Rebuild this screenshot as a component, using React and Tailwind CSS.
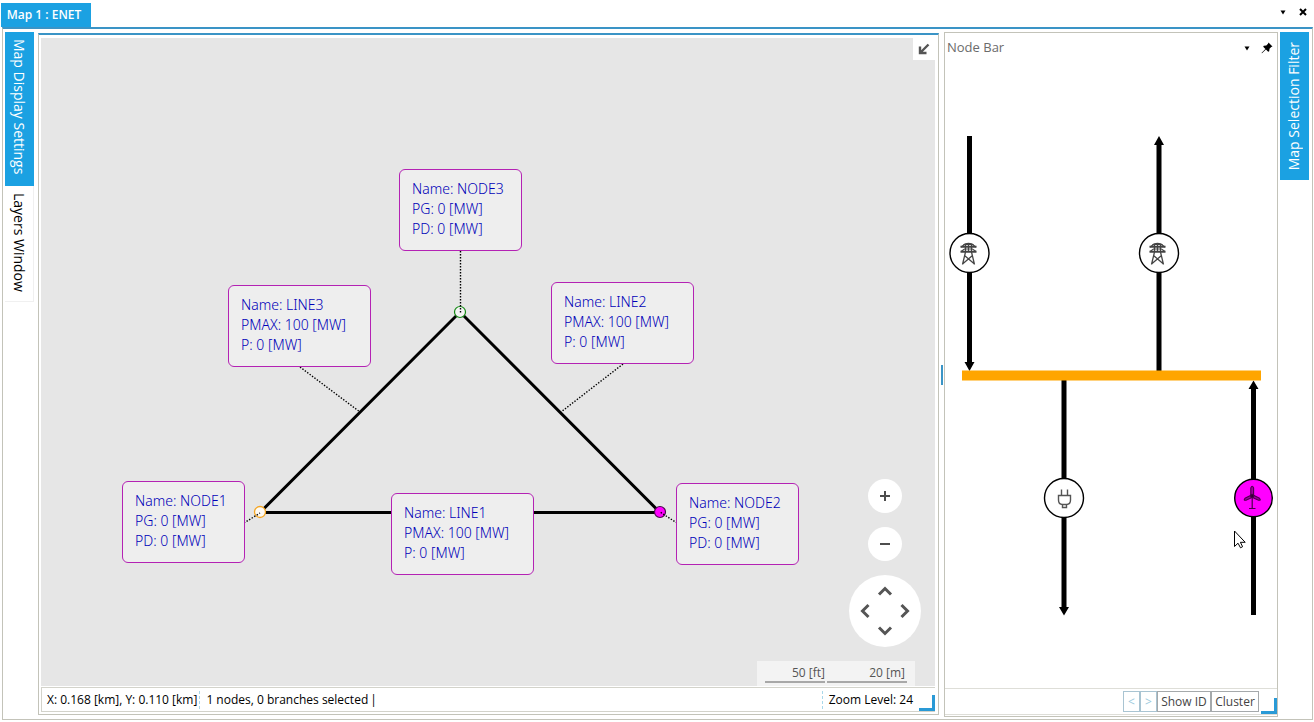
import React from "react";

const LABELS = [
  { name: "NODE3", pos: "left-[358px] top-[131px] w-[123px]", rows: ["PG: 0 [MW]", "PD: 0 [MW]"] },
  { name: "LINE3", pos: "left-[187px] top-[247px] w-[143px]", rows: ["PMAX: 100 [MW]", "P: 0 [MW]"] },
  { name: "LINE2", pos: "left-[510px] top-[244px] w-[143px]", rows: ["PMAX: 100 [MW]", "P: 0 [MW]"] },
  { name: "NODE1", pos: "left-[81px] top-[443px] w-[123px]", rows: ["PG: 0 [MW]", "PD: 0 [MW]"] },
  { name: "LINE1", pos: "left-[350px] top-[455px] w-[143px]", rows: ["PMAX: 100 [MW]", "P: 0 [MW]"] },
  { name: "NODE2", pos: "left-[635px] top-[445px] w-[123px]", rows: ["PG: 0 [MW]", "PD: 0 [MW]"] },
];

function Caret() {
  return (
    <svg width="6" height="5" viewBox="0 0 6 5" aria-hidden="true">
      <path d="M0.5 0.5H5.5L3 4.5Z" fill="#000" />
    </svg>
  );
}

function Corner() {
  return <span className="h-4 w-4 shrink-0 self-end border-b-3 border-r-3 border-[#2a9ad6]" />;
}

function Network() {
  return (
    <svg className="absolute inset-0 h-full w-full" aria-hidden="true">
      <g stroke="#000" strokeWidth="3" fill="none">
        <path d="M219 474.5L419 274L619 474.5Z" />
      </g>
      <circle cx="419" cy="274" r="5.5" fill="#f4f4f4" stroke="#148a14" strokeWidth="1.2" />
      <circle cx="219" cy="474" r="5.5" fill="#fdfaf5" stroke="#f5a623" strokeWidth="1.3" />
      <circle cx="619" cy="474" r="5.5" fill="#ff00ff" stroke="#4a0a4a" strokeWidth="1.2" />
      <g stroke="#000" strokeWidth="1.4" strokeDasharray="1.4 1.6" fill="none">
        <path d="M419.5 213V275" />
        <path d="M259 329L319 374" />
        <path d="M582 326L520 374" />
        <path d="M203 485L219 475" />
        <path d="M636 485L619 474" />
      </g>
    </svg>
  );
}

function MapLabel({ name, pos, rows }) {
  return (
    <div
      className={
        "absolute h-[82px] whitespace-nowrap rounded-md border border-[#b422b4] bg-[#eeeeee] px-3 pt-[9px] font-['Noto_Sans','Open_Sans',sans-serif] text-sm leading-5 font-light text-[#0000b8] " +
        pos
      }
    >
      <p>Name: {name}</p>
      {rows.map((r) => (
        <p key={r}>{r}</p>
      ))}
    </div>
  );
}

function MapControls() {
  return (
    <div className="absolute right-[14px] bottom-[39px] flex flex-col items-center gap-[14px]">
      <button aria-label="Zoom in" className="grid h-[34px] w-[34px] place-items-center rounded-full bg-white">
        <svg width="12" height="12" viewBox="0 0 12 12" stroke="#4d4d4d" strokeWidth="2">
          <path d="M1 6H11M6 1V11" />
        </svg>
      </button>
      <button aria-label="Zoom out" className="grid h-[34px] w-[34px] place-items-center rounded-full bg-white">
        <svg width="12" height="12" viewBox="0 0 12 12" stroke="#4d4d4d" strokeWidth="2">
          <path d="M1 6H11" />
        </svg>
      </button>
      <div className="grid h-[72px] w-[72px] grid-cols-3 grid-rows-3 place-items-center rounded-full bg-white p-1.5">
        <button aria-label="Pan up" className="col-start-2 row-start-1">
          <svg width="16" height="10" viewBox="0 0 16 10" fill="none" stroke="#555" strokeWidth="3">
            <path d="M2 8.5L8 2.5L14 8.5" />
          </svg>
        </button>
        <button aria-label="Pan left" className="col-start-1 row-start-2">
          <svg width="10" height="16" viewBox="0 0 10 16" fill="none" stroke="#555" strokeWidth="3">
            <path d="M8.5 2L2.5 8L8.5 14" />
          </svg>
        </button>
        <button aria-label="Pan right" className="col-start-3 row-start-2">
          <svg width="10" height="16" viewBox="0 0 10 16" fill="none" stroke="#555" strokeWidth="3">
            <path d="M1.5 2L7.5 8L1.5 14" />
          </svg>
        </button>
        <button aria-label="Pan down" className="col-start-2 row-start-3">
          <svg width="16" height="10" viewBox="0 0 16 10" fill="none" stroke="#555" strokeWidth="3">
            <path d="M2 1.5L8 7.5L14 1.5" />
          </svg>
        </button>
      </div>
    </div>
  );
}

function MapPanel() {
  return (
    <section className="mt-px mb-[2px] flex min-w-0 flex-1 flex-col border border-t-2 border-[#c3c3b9] border-t-[#3a94c6] pt-[3px] pr-[3px] pb-[2px] pl-[2px]">
      <div className="relative min-h-[640px] flex-1 overflow-hidden bg-[#e6e6e6]">
        <Network />
        {LABELS.map((l) => (
          <MapLabel key={l.name} {...l} />
        ))}
        <button aria-label="Collapse overview" className="absolute top-0 right-0 grid h-[22px] w-[22px] place-items-center bg-white">
          <svg width="12" height="12" viewBox="0 0 12 12" fill="none" stroke="#555" strokeWidth="2.4">
            <path d="M10.5 1.5L3 9M2 3.5V10H8.5" />
          </svg>
        </button>
        <MapControls />
        <div className="absolute right-5 bottom-0 flex h-[25px] gap-0.5 bg-[#f3f3f3] px-2 pb-[3px] text-right text-xs leading-6 text-[#555]">
          <span className="w-[60px] border-b-2 border-[#a8a8a8]">50 [ft]</span>
          <span className="w-[80px] border-b-2 border-[#a8a8a8] pr-0.5">20 [m]</span>
        </div>
      </div>
      <footer className="mt-px flex h-[25px] items-center border border-[#d3d3cb] border-r-0 pl-[5px] text-xs text-black">
        <span>X: 0.168 [km], Y: 0.110 [km]</span>
        <span className="mr-1.5 ml-0.5 h-[18px] border-l border-dashed border-[#a9d8ea]" />
        <span>1 nodes, 0 branches selected</span>
        <span className="ml-0.5">|</span>
        <span className="ml-auto h-[18px] border-l border-dashed border-[#a9d8ea]" />
        <span className="mx-1.5">Zoom Level: 24</span>
        <Corner />
      </footer>
    </section>
  );
}

function Pylon({ x, y }) {
  return (
    <g transform={`translate(${x} ${y})`} fill="none" stroke="#444" strokeWidth="1.1">
      <path d="M-5 -8.5Q-3.5 -10 0 -10Q3.5 -10 5 -8.5" strokeWidth="1.4" />
      <path d="M-8 -6.8H8M-8 -1.8H8" strokeWidth="1.9" />
      <path d="M-7.5 -6.5L-4 -9H4L7.5 -6.5M-7.5 -2L-4 -4.5H4L7.5 -2" />
      <path d="M-3 -9.5V-1.5M3 -9.5V-1.5M0 -10V-2" />
      <path d="M-3 -1.5L-6 11M3 -1.5L6 11M-4 2L6 10.5M4 2L-6 10.5" strokeWidth="1.3" />
    </g>
  );
}

function BusDiagram() {
  return (
    <svg className="block shrink-0" width="332" height="500" viewBox="945 126 332 500" role="img" aria-label="Node connections">
      <g stroke="#000" strokeWidth="5">
        <path d="M969.5 136V364M1159 143V371M1064 380V608M1253.5 387V615" />
      </g>
      <path d="M964.5 362H974.5L969.5 371ZM1154 145H1164L1159 136ZM1059 607H1069L1064 615.5ZM1248.5 389H1258.5L1253.5 380.5Z" />
      <path d="M962 370.5H1261V380.5H962Z" fill="#ffa500" />
      <g fill="#fff" stroke="#000" strokeWidth="1.4">
        <circle cx="969.5" cy="253" r="19.5" />
        <circle cx="1159" cy="253" r="19.5" />
        <circle cx="1064" cy="498" r="19.5" />
        <circle cx="1253.5" cy="498" r="18.8" fill="#ff00ff" />
      </g>
      <Pylon x={968.5} y={253.5} />
      <Pylon x={1157.5} y={253.5} />
      <g fill="none" stroke="#555" strokeWidth="1.4">
        <path d="M1061.5 489.5V495M1067.5 489.5V495" />
        <path d="M1058.5 495.5H1070.5V500Q1070.5 504.5 1066.5 504.5H1062.5Q1058.5 504.5 1058.5 500Z" />
        <path d="M1062.5 504.5V507.5H1066.5V504.5" />
      </g>
      <g fill="#a000a0" stroke="#4a004a" strokeWidth="1.1">
        <path d="M1250.8 494.5V488Q1252.2 484.5 1253.6 488V494.5Z" />
        <path d="M1251.5 495L1245 498.3Q1243 500.5 1246 500.2L1252 497.5Z" />
        <path d="M1253 495L1259.5 498.3Q1261.5 500.5 1258.5 500.2L1252.5 497.5Z" />
        <circle cx="1252.2" cy="496" r="1.6" fill="#300030" />
        <path d="M1252.2 498V508M1249 508.5H1255.5" strokeWidth="1.2" />
      </g>
      <path d="M1234.5 531V546.5L1238 543.2L1240.5 547.8L1242.6 546.7L1240.4 542.3H1245.2Z" fill="#fff" stroke="#000" strokeWidth="1" />
    </svg>
  );
}

function NodeBar() {
  return (
    <section className="flex w-[334px] shrink-0 flex-col border border-[#c3c3b9] pb-px">
      <header className="flex h-[30px] items-center px-[2px] text-[13px] text-[#6b6b6b]">
        <h2>Node Bar</h2>
        <button aria-label="Node bar menu" className="ml-auto grid h-4 w-4 place-items-center">
          <Caret />
        </button>
        <button aria-label="Pin node bar" className="ml-1 grid h-4 w-4 place-items-center">
          <svg width="12" height="12" viewBox="0 0 12 12" fill="#000">
            <path d="M7.5 0.5L11.5 4.5L10.2 5L8.5 6.7L8.2 9.3L7.2 9.8L4.9 7.5L1 11.3L0.5 11L4.4 7L2.2 4.8L2.8 3.8L5.3 3.5L7 1.8Z" />
          </svg>
        </button>
      </header>
      <div className="flex flex-1 items-center">
        <BusDiagram />
      </div>
      <footer className="flex h-[27px] items-center justify-end border-y border-[#deded8] text-xs text-[#444]">
        <button disabled className="h-[21px] w-[17px] border border-[#a9c4d2] text-[#9cc9dd]">&lt;</button>
        <button disabled className="h-[21px] w-[17px] border border-[#a9c4d2] text-[#9cc9dd]">&gt;</button>
        <button className="h-[21px] w-[54px] border border-[#a5a9ab]">Show ID</button>
        <button className="mr-[2px] h-[21px] w-[48px] border border-[#a5a9ab]">Cluster</button>
        <Corner />
      </footer>
    </section>
  );
}

export default function App() {
  return (
    <div className="flex min-h-screen flex-col bg-white pr-px pb-[2px] pl-px font-['Open_Sans','Noto_Sans',sans-serif]">
      <header className="flex h-[27px] items-end">
        <button className="h-6 w-[90px] bg-[#1ba1e2] pr-1 text-xs font-semibold text-white">Map 1 : ENET</button>
        <div className="mr-0.5 mb-[7px] ml-auto flex items-center gap-1">
          <button aria-label="Window list" className="grid h-4 w-4 place-items-center">
            <Caret />
          </button>
          <button aria-label="Close" className="grid h-4 w-4 place-items-center">
            <svg width="8" height="8" viewBox="0 0 8 8" stroke="#000" strokeWidth="2">
              <path d="M1 1L7 7M7 1L1 7" />
            </svg>
          </button>
        </div>
      </header>
      <main className="ml-px flex flex-1 border border-t-2 border-[#c3c3b9] border-t-[#3a94c6] pt-[3px] pr-[3px] pb-[2px] pl-[2px]">
        <nav className="mr-1 flex w-[29px] shrink-0 flex-col text-sm">
          <button className="flex h-[154px] items-start bg-[#1ba1e2] pt-[7px] text-white">
            <span className="w-full leading-[29px] [writing-mode:vertical-rl]">Map Display Settings</span>
          </button>
          <button className="flex h-[116px] items-start border-r border-b border-[#f0f0f0] pt-[7px] text-black">
            <span className="w-full leading-[28px] [writing-mode:vertical-rl]">Layers Window</span>
          </button>
        </nav>
        <MapPanel />
        <div className="flex w-[5px] shrink-0 items-center justify-center">
          <span className="h-5 w-0.5 bg-[#3a94c6]" />
        </div>
        <NodeBar />
        <nav className="ml-[2px] w-[29px] shrink-0 text-sm">
          <button className="flex h-[148px] w-full items-center justify-center bg-[#1ba1e2] pr-0.5 text-white">
            <span className="rotate-180 leading-6 [writing-mode:vertical-rl]">Map Selection Filter</span>
          </button>
        </nav>
      </main>
    </div>
  );
}
